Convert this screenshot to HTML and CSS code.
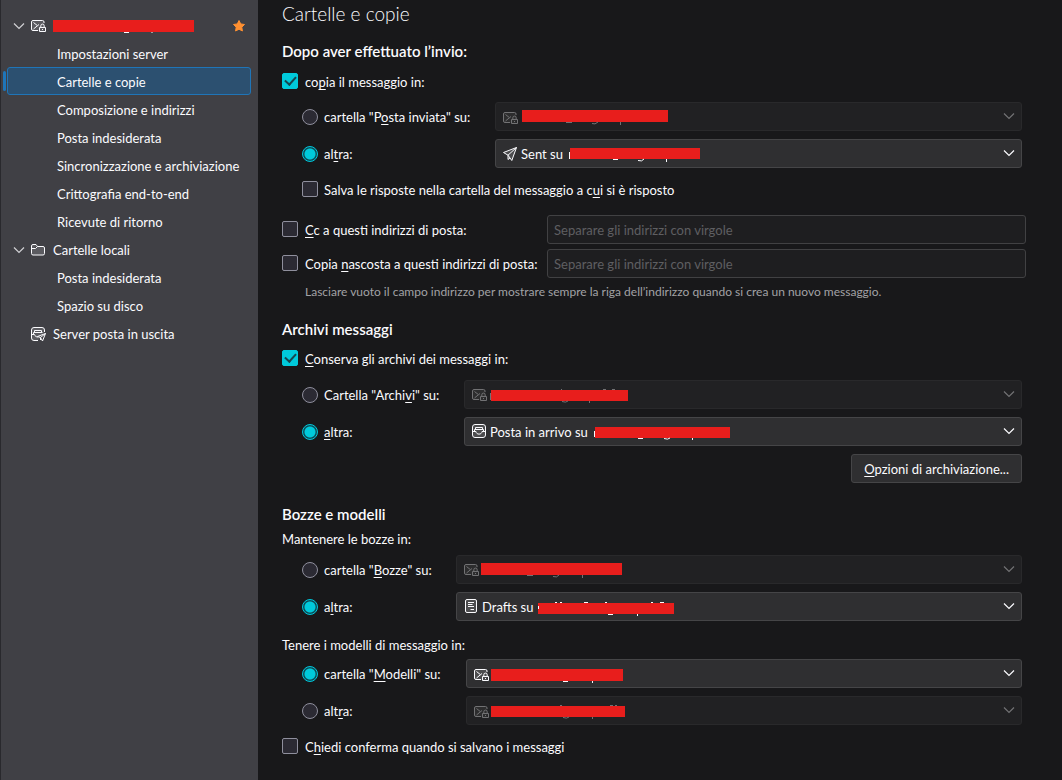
FILE: index.html
```html
<!DOCTYPE html>
<html lang="it">
<head>
<meta charset="utf-8">
<title>Cartelle e copie</title>
<link rel="stylesheet" href="styles.css">
</head>
<body>
<svg class="defs" aria-hidden="true">
  <symbol id="mail-lock" viewBox="0 0 16 16">
    <rect x="1.5" y="2.5" width="13" height="10.500" rx="1.500" fill="currentColor" fill-opacity=".15"/>
    <path d="M8 12.500H3A1.500 1.500 0 0 1 1.500 11V4A1.500 1.500 0 0 1 3 2.500H12.500A1.500 1.500 0 0 1 14 4V5M3.500 4.500L7.500 7.700L3.500 11M7.500 7.700L9 6.500" fill="none" stroke="currentColor"/>
    <path d="M9.500 9.500H15.500V13.500H9.500ZM10.800 9.500V7.800A1.700 1.700 0 0 1 14.200 7.800V9.500M12.500 11V12" fill="none" stroke="currentColor"/>
  </symbol>
  <symbol id="folder" viewBox="0 0 16 16">
    <path d="M1.500 4A1.500 1.500 0 0 1 3 2.500H6L7.500 4.500H13A1.500 1.500 0 0 1 14.500 6V11.500A1.500 1.500 0 0 1 13 13H3A1.500 1.500 0 0 1 1.500 11.500ZM1.500 6.500H5.500L7.500 4.500" fill="currentColor" fill-opacity=".15" stroke="currentColor"/>
  </symbol>
  <symbol id="inbox" viewBox="0 0 16 16">
    <rect x="1.500" y="1.500" width="13" height="13" rx="2.500" fill="currentColor" fill-opacity=".15" stroke="currentColor"/>
    <path d="M1.500 8.500H5C5 12 11 12 11 8.500H14.500M3.500 8V6.500H12.500V8M4.500 6.500V4.500H11.500V6.500" fill="none" stroke="currentColor"/>
  </symbol>
  <symbol id="outbox" viewBox="0 0 16 16">
    <path d="M8 14.500H4A2.500 2.500 0 0 1 1.500 12V4A2.500 2.500 0 0 1 4 1.500H12A2.500 2.500 0 0 1 14.500 4V6M1.500 8.500H4.500C5 10.500 6.500 11 8 11M3.500 8V6.500H12.500M4.500 6.500V4.500H11.500V6.500" fill="currentColor" fill-opacity=".15" stroke="currentColor"/>
    <path d="M15.500 7.500L7.500 10.500L10.500 11.500L12.500 15ZM15.500 7.500L10.500 11.500V14" fill="none" stroke="currentColor"/>
  </symbol>
  <symbol id="plane" viewBox="0 0 16 16">
    <path d="M14.500 1.500L1.500 6.500L6 9.200L9.800 14.500ZM14.500 1.500L6 9.200V13.500L8 12" fill="currentColor" fill-opacity=".15" stroke="currentColor" stroke-linejoin="round"/>
  </symbol>
  <symbol id="draft" viewBox="0 0 16 16">
    <rect x="2.500" y="1.500" width="11" height="13" rx="1.500" fill="currentColor" fill-opacity=".15" stroke="currentColor"/>
    <path d="M5 4.500H11M5 6.500H9.500M5 8.500H11M7.500 11.500H11" fill="none" stroke="currentColor"/>
  </symbol>
  <symbol id="chevron" viewBox="0 0 12 12">
    <path d="M1 3.500L6 8.500L11 3.500" fill="none" stroke="currentColor" stroke-width="1.200"/>
  </symbol>
</svg>

<nav class="sidebar" aria-label="Account">
  <ul class="tree">
    <li><a class="account" href="#account" aria-label="Account di posta">
      <svg class="twisty"><use href="#chevron"/></svg>
      <svg class="icon"><use href="#mail-lock"/></svg>
      <svg class="account-mask" viewBox="0 0 141 16"><rect y="2" width="141" height="12" fill="#e81e1c"/><path d="M71 14.500H76M99 14V15" stroke="currentColor"/></svg>
      <svg class="star" viewBox="0 0 12 12"><path d="M6 .5L7.700 3.900L11.500 4.500L8.800 7.200L9.400 11L6 9.200L2.600 11L3.200 7.200L.5 4.500L4.300 3.900Z" fill="#ff9031" stroke="#ff9031" stroke-linejoin="round"/></svg>
    </a></li>
    <li><a class="child" href="#server">Impostazioni server</a></li>
    <li><a class="child selected" href="#copie" aria-current="page">Cartelle e copie</a></li>
    <li><a class="child" href="#composizione">Composizione e indirizzi</a></li>
    <li><a class="child" href="#indesiderata">Posta indesiderata</a></li>
    <li><a class="child" href="#sincronizzazione">Sincronizzazione e archiviazione</a></li>
    <li><a class="child" href="#crittografia">Crittografia end-to-end</a></li>
    <li><a class="child" href="#ricevute">Ricevute di ritorno</a></li>
    <li><a class="account" href="#locali"><svg class="twisty"><use href="#chevron"/></svg><svg class="icon"><use href="#folder"/></svg>Cartelle locali</a></li>
    <li><a class="child" href="#locali-indesiderata">Posta indesiderata</a></li>
    <li><a class="child" href="#disco">Spazio su disco</a></li>
    <li><a class="account no-twisty" href="#uscita"><svg class="icon"><use href="#outbox"/></svg>Server posta in uscita</a></li>
  </ul>
</nav>

<main class="panel">
  <h1>Cartelle e copie</h1>

  <section>
    <h2>Dopo aver effettuato l’invio:</h2>
    <label class="choice"><input type="checkbox" checked><span>co<u>p</u>ia il messaggio in:</span></label>
    <div class="options sent">
      <label class="choice"><input type="radio" name="sent"><span>cartella "P<u>o</u>sta inviata" su:</span></label>
      <div class="picker">
        <select disabled aria-label="Account per la posta inviata"><option></option></select>
        <svg class="mask off" viewBox="0 0 300 29"><use href="#mail-lock" x="7" y="8" width="16" height="16"/><rect x="27" y="8" width="146" height="12" fill="#e81e1c"/><path d="M71 20.500H77M97 21.500Q100 23 103 20M125.500 20V23" fill="none" stroke="currentColor"/></svg>
        <svg class="arrow off"><use href="#chevron"/></svg>
      </div>
      <label class="choice"><input type="radio" name="sent" checked><span>al<u>t</u>ra:</span></label>
      <div class="picker">
        <select aria-label="Altra cartella per la posta inviata"><option>Sent su</option></select>
        <svg class="mask" viewBox="0 0 300 29"><use href="#plane" x="7" y="7" width="16" height="16"/><rect x="75" y="9" width="130" height="11" fill="#e81e1c"/><path d="M74.500 13V20M118 20.500H123M143 21.500Q147 23 149 20M171.500 20V23" fill="none" stroke="currentColor"/></svg>
        <svg class="arrow"><use href="#chevron"/></svg>
      </div>
    </div>
    <label class="choice reply"><input type="checkbox"><span>Salva le risposte nella cartella del messaggio a c<u>u</u>i si è risposto</span></label>
    <div class="addresses">
      <label class="choice"><input type="checkbox"><span><u>C</u>c a questi indirizzi di posta:</span></label>
      <input class="field" type="text" aria-label="Indirizzi Cc" placeholder="Separare gli indirizzi con virgole">
      <label class="choice"><input type="checkbox"><span>Copia <u>n</u>ascosta a questi indirizzi di posta:</span></label>
      <input class="field" type="text" aria-label="Indirizzi Ccn" placeholder="Separare gli indirizzi con virgole">
    </div>
    <p class="hint">Lasciare vuoto il campo indirizzo per mostrare sempre la riga dell’indirizzo quando si crea un nuovo messaggio.</p>
  </section>

  <section>
    <h2>Archivi messaggi</h2>
    <label class="choice"><input type="checkbox" checked><span><u>C</u>onserva gli archivi dei messaggi in:</span></label>
    <div class="options archive">
      <label class="choice"><input type="radio" name="archive"><span>Cartella "Archi<u>v</u>i" su:</span></label>
      <div class="picker">
        <select disabled aria-label="Account per gli archivi"><option></option></select>
        <svg class="mask off" viewBox="0 0 300 29"><use href="#mail-lock" x="7" y="7" width="16" height="16"/><rect x="27" y="10" width="137" height="11" fill="#e81e1c"/><path d="M26.500 13V20M97 9.500H98M139 9.500H142M148 9.500H151M98 21.500Q102 23 104 21M125.500 21V23" fill="none" stroke="currentColor"/></svg>
        <svg class="arrow off"><use href="#chevron"/></svg>
      </div>
      <label class="choice"><input type="radio" name="archive" checked><span><u>a</u>ltra:</span></label>
      <div class="picker">
        <select aria-label="Altra cartella per gli archivi"><option>Posta in arrivo su</option></select>
        <svg class="mask" viewBox="0 0 300 29"><use href="#inbox" x="7" y="6" width="16" height="16"/><rect x="131" y="10" width="135" height="11" fill="#e81e1c"/><path d="M130.500 14V20M174 21.500H179M200 21.500Q204 23 206 21M228.500 21V23" fill="none" stroke="currentColor"/></svg>
        <svg class="arrow"><use href="#chevron"/></svg>
      </div>
      <button class="button" type="button"><u>O</u>pzioni di archiviazione...</button>
    </div>
  </section>

  <section class="drafts-section">
    <h2>Bozze e modelli</h2>
    <p class="lead">Mantenere le bozze in:</p>
    <div class="options drafts">
      <label class="choice"><input type="radio" name="drafts"><span>cartella "<u>B</u>ozze" su:</span></label>
      <div class="picker">
        <select disabled aria-label="Account per le bozze"><option></option></select>
        <svg class="mask off" viewBox="0 0 300 29"><use href="#mail-lock" x="7" y="7" width="16" height="16"/><rect x="25" y="8" width="141" height="12" fill="#e81e1c"/><path d="M71 20.500H77M97 21.500Q101 23 103 20M126.500 20V23" fill="none" stroke="currentColor"/></svg>
        <svg class="arrow off"><use href="#chevron"/></svg>
      </div>
      <label class="choice"><input type="radio" name="drafts" checked><span>a<u>l</u>tra:</span></label>
      <div class="picker">
        <select aria-label="Altra cartella per le bozze"><option>Drafts su</option></select>
        <svg class="mask" viewBox="0 0 300 29"><use href="#draft" x="7" y="6" width="16" height="16"/><rect x="82" y="11" width="136" height="11" fill="#e81e1c"/><path d="M82.500 14V17M99 10.500H101M104 10.500H106M128 10.500H132M149 10.500H151M195 10.500H197M204 10.500H208M152 22.500H157M181.500 22V24" fill="none" stroke="currentColor"/></svg>
        <svg class="arrow"><use href="#chevron"/></svg>
      </div>
    </div>
    <p class="lead templates-lead">Tenere i modelli di messaggio in:</p>
    <div class="options templates">
      <label class="choice"><input type="radio" name="templates" checked><span>cartella "<u>M</u>odelli" su:</span></label>
      <div class="picker">
        <select aria-label="Account per i modelli"><option></option></select>
        <svg class="mask" viewBox="0 0 300 29"><use href="#mail-lock" x="7" y="8" width="16" height="16"/><rect x="25" y="10" width="132" height="12" fill="#e81e1c"/><path d="M97 22.500H102M126.500 22V24" stroke="currentColor"/></svg>
        <svg class="arrow"><use href="#chevron"/></svg>
      </div>
      <label class="choice"><input type="radio" name="templates"><span>alt<u>r</u>a:</span></label>
      <div class="picker">
        <select disabled aria-label="Altra cartella per i modelli"><option></option></select>
        <svg class="mask off" viewBox="0 0 300 29"><use href="#mail-lock" x="7" y="8" width="16" height="16"/><rect x="25" y="10" width="134" height="11" fill="#e81e1c"/><path d="M94 9.500H96M144 9.500H147M149 9.500H151M97 21.500Q101 23 103 21M126.500 21V23" fill="none" stroke="currentColor"/></svg>
        <svg class="arrow off"><use href="#chevron"/></svg>
      </div>
    </div>
    <label class="choice confirm"><input type="checkbox"><span>C<u>h</u>iedi conferma quando si salvano i messaggi</span></label>
  </section>
</main>
</body>
</html>
```
FILE: styles.css
```css
* { box-sizing: border-box; }

body {
  margin: 0;
  min-height: 100vh;
  display: flex;
  background: #18181a;
  color: #fbfbfe;
  font: 13px/20px Lato, "Open Sans", sans-serif;
}

h1, h2, p, ul { margin: 0; padding: 0; }
u { text-underline-offset: 2px; }
.defs { position: absolute; width: 0; height: 0; }

.sidebar {
  flex: 0 0 258px;
  padding: 11px 7px 0 6px;
  background: #404045;
  border-left: 1px solid #29292d;
}
.tree { list-style: none; }
.tree a {
  display: flex;
  align-items: center;
  height: 28px;
  color: inherit;
  text-decoration: none;
  white-space: nowrap;
  border: 1px solid transparent;
  border-radius: 3px;
}
.tree .child { padding: 2px 0 0 49px; }
.tree .account { padding: 2px 5px 0 5px; }
.tree .no-twisty { padding-left: 22px; }
.tree .selected {
  position: relative;
  background: #2c5070;
  border-color: #1f75b8;
}
.selected::before {
  content: "";
  position: absolute;
  left: -5px;
  top: 3px;
  width: 3px;
  height: 20px;
  background: #1f75b8;
  border-radius: 2px;
}
.twisty { width: 12px; height: 12px; margin-right: 5px; color: #d0d0d4; }
.icon { width: 16px; height: 16px; margin-right: 7px; }
.account-mask { width: 141px; height: 16px; }
.star { width: 12px; height: 12px; margin-left: auto; }

.panel { flex: 1; min-width: 0; padding: 0 36px 22px 24px; }
h1 { font-size: 19px; line-height: 28px; font-weight: 300; }
h2 { font-size: 15px; line-height: 20px; font-weight: 600; margin: 13px 0 11px; }
section + section h2 { margin: 17px 0 10px; }
section.drafts-section h2 { margin: 21px 0 5px; }

.choice { display: flex; align-items: center; gap: 7px; min-height: 20px; white-space: nowrap; }
.options .choice, .reply { gap: 6px; }
.choice input {
  appearance: none;
  flex: none;
  width: 16px;
  height: 16px;
  margin: 0 0 2px;
  background: #2b2a33;
  border: 1px solid #8f8f9d;
  border-radius: 2px;
}
.choice input[type="radio"] { border-radius: 50%; margin: 0; }
.choice input[type="radio"]:checked {
  border-color: #00c8dc;
  background: radial-gradient(circle, #00cadb 5px, #0b4c57 6px);
}
.choice input[type="checkbox"]:checked { border-color: #00cadb; background: #00cadb; display: grid; place-items: center; }
.choice input[type="checkbox"]:checked::before {
  content: "";
  width: 5px;
  height: 9px;
  margin-bottom: 3px;
  border: solid #164650;
  border-width: 0 2px 2px 0;
  transform: rotate(42deg);
}

.options {
  display: grid;
  grid-template-columns: 162px 1fr;
  gap: 8px 0;
  margin: 11px 4px 0 20px;
}
.options.sent { grid-template-columns: 193px 1fr; margin-top: 10px; }
.options.drafts { grid-template-columns: 154px 1fr; margin-top: 6px; }
.options.templates { grid-template-columns: 164px 1fr; margin-top: 4px; }

.picker { position: relative; height: 29px; }
select, .button {
  height: 29px;
  color: inherit;
  font: inherit;
  background: #2f2f31;
  border: 1px solid #454547;
  border-radius: 3px;
}
select { appearance: none; display: block; width: 100%; padding: 1px 25px; }
select:disabled { background: #212123; border-color: #29292b; opacity: 1; }
.mask { position: absolute; left: 0; top: 0; width: 300px; height: 29px; pointer-events: none; }
.arrow { position: absolute; right: 7px; top: 8px; width: 12px; height: 12px; pointer-events: none; }
.off { color: #727274; }
.button { grid-column: 2; justify-self: end; padding: 0 12px; }

.reply { margin: 12px 0 0 20px; }
.addresses {
  display: grid;
  grid-template-columns: 265px 1fr;
  gap: 5px 0;
  margin-top: 15px;
}
.field {
  width: 100%;
  height: 29px;
  padding: 1px 6px;
  color: inherit;
  font: inherit;
  background: #1e1e20;
  border: 1px solid #414143;
  border-radius: 3px;
}
.field::placeholder { color: #5f5f62; opacity: 1; }
.hint { margin: 4px 0 0 23px; font-size: 12px; color: #a2a2a5; }
.templates-lead { margin-top: 14px; }
.confirm { margin-top: 12px; }
```
